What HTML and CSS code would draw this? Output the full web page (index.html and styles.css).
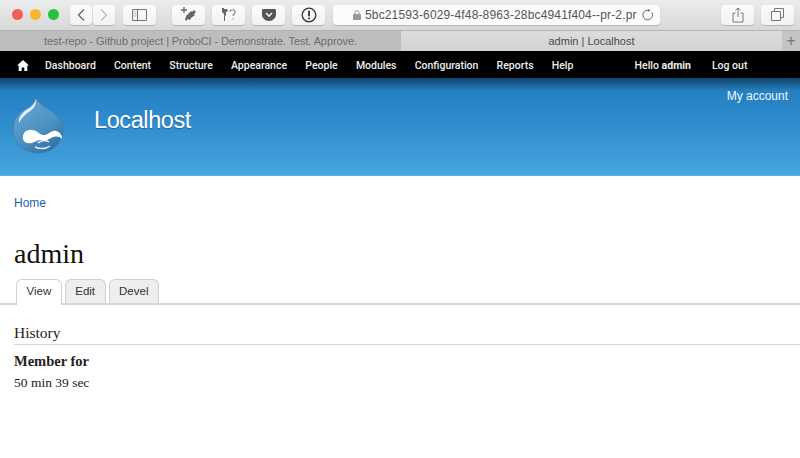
FILE: index.html
```html
<!DOCTYPE html>
<html lang="en">
<head>
  <meta charset="UTF-8">
  <title>admin | Localhost</title>
  <link rel="stylesheet" href="styles.css">
</head>
<body>
  <!-- Browser chrome -->
  <div class="toolbar">
    <div class="lights">
      <span class="light red"></span>
      <span class="light yellow"></span>
      <span class="light green"></span>
    </div>
    <div class="btn-pair">
      <span class="btn btn-nav">
        <svg width="10" height="14" viewBox="0 0 10 14"><path d="M8 1.5 2.5 7 8 12.5" fill="none" stroke="#666" stroke-width="1.3"/></svg>
      </span>
      <span class="btn btn-nav">
        <svg width="10" height="14" viewBox="0 0 10 14"><path d="M2 1.5 7.5 7 2 12.5" fill="none" stroke="#bbb" stroke-width="1.3"/></svg>
      </span>
    </div>
    <span class="btn btn-side">
      <svg width="15" height="12" viewBox="0 0 15 12"><path d="M.5.5h14v11H.5zM5.5.5v11" fill="none" stroke="#777"/><path d="M1.5 3h3M1.5 5h3M1.5 7h3" stroke="#bbb"/></svg>
    </span>
    <div class="ext-group">
      <span class="btn btn-ext">
        <svg width="16" height="15" viewBox="0 0 16 15"><path d="M5 9l5-5 1 1 2-2 2 2-2 2 1 1-4 3-1 2-2-1-2 2-1-2 1-2z" fill="#666"/><path d="M3 0v6M0 3h6" stroke="#666" stroke-width="1.3"/></svg>
      </span>
      <span class="btn btn-ext">
        <svg width="16" height="15" viewBox="0 0 16 15"><path d="M1 1h2v1h3l1 2-2 1v3L4 9v5H3V7L1 5z" fill="#666"/><path d="M9 5c0-3 5-3 5 0 0 2-2 2-2 4" fill="none" stroke="#888" stroke-width="1.2"/><path d="M12 11v1.500" stroke="#999"/></svg>
      </span>
      <span class="btn btn-ext">
        <svg width="14" height="12" viewBox="0 0 14 12"><path d="M0 1.5C0 .5.5 0 1.5 0h11c1 0 1.500.5 1.500 1.500v4C14 9 11 12 7 12S0 9 0 5.500z" fill="#555"/><path d="M4 4l3 3 3-3" fill="none" stroke="#f0f0f0" stroke-width="1.600"/></svg>
      </span>
      <span class="btn btn-ext">
        <svg width="16" height="16" viewBox="0 0 16 16"><circle cx="8" cy="8" r="6.800" fill="none" stroke="#333" stroke-width="1.300"/><path d="M8 3.800v5.500" stroke="#333" stroke-width="1.800"/><path d="M8 10.500v1.800" stroke="#333" stroke-width="1.800"/></svg>
      </span>
    </div>
    <div class="address">
      <svg class="lock" width="8" height="10" viewBox="0 0 8 10"><rect y="4" width="8" height="6" rx="1" fill="#999"/><path d="M2 4V2.500a2 2 0 0 1 4 0V4" fill="none" stroke="#999"/></svg>
      <span class="url">5bc21593-6029-4f48-8963-28bc4941f404--pr-2.pr</span>
      <svg class="reload" width="12" height="12" viewBox="0 0 12 12"><path d="M9.800 3.500A4.800 4.800 0 1 1 6 1.200" fill="none" stroke="#666"/><path d="M6 0l2.500 1.300L6 2.800z" fill="#666"/></svg>
    </div>
    <div class="toolbar-right">
      <span class="btn btn-ext">
        <svg width="12" height="16" viewBox="0 0 12 16"><path d="M3.500 6H1v9h10V6H8.500M6 10V1M3.500 3.300 6 1l2.500 2.300" fill="none" stroke="#777"/></svg>
      </span>
      <span class="btn btn-ext">
        <svg width="13" height="13" viewBox="0 0 13 13"><path d="M3.500 3V.5h9v9H10M.5 3.500h9v9h-9z" fill="none" stroke="#777"/></svg>
      </span>
    </div>
  </div>

  <div class="tabs-bar">
    <div class="browser-tab">test-repo - Github project | ProboCI - Demonstrate. Test. Approve.</div>
    <div class="browser-tab active">admin | Localhost</div>
    <div class="new-tab">+</div>
  </div>

  <!-- Admin menu -->
  <nav class="admin-menu">
    <svg class="home-icon" width="12" height="11" viewBox="0 0 12 11"><path d="M6 0 0 5.500h1.700V11h3V7.500h2.600V11h3V5.500H12z" fill="#fff"/></svg>
    <a href="#">Dashboard</a>
    <a href="#">Content</a>
    <a href="#">Structure</a>
    <a href="#">Appearance</a>
    <a href="#">People</a>
    <a href="#">Modules</a>
    <a href="#">Configuration</a>
    <a href="#">Reports</a>
    <a href="#">Help</a>
    <div class="menu-user">
      <span>Hello <b>admin</b></span>
      <a href="#">Log out</a>
    </div>
  </nav>

  <!-- Site header -->
  <header class="site-header">
    <svg class="logo" width="52" height="58" viewBox="0 0 52 58">
      <defs>
        <linearGradient id="dropFill" x1="0.2" y1="0" x2="0.8" y2="1">
          <stop offset="0" stop-color="#6aa8d4"/>
          <stop offset="0.6" stop-color="#4a90c0"/>
          <stop offset="1" stop-color="#2f6f9e"/>
        </linearGradient>
      </defs>
      <path d="M24 1c1 5 7 9 14 13 8 5 13 11 13 19 0 14-11 24-25 24S1 47 1 33C1 22 8 16 15 12c4-2 8-6 9-11z" fill="url(#dropFill)" stroke="#3a7cab" stroke-width="0.8"/>
      <path d="M24 3c0 5-1 9-6 12-4 3-8 6-11 12-1-6 4-11 9-14 4-2 7-6 8-10z" fill="#e8f2fa"/>
      <path d="M11 43c-1-6 4-10 9-9 5 0 8 6 13 5 4-1 7-5 11-4 4 1 6 4 6 8-3-3-7-3-11-1-3 2-6 3-10 2-4 0-6 2-9 3-4 1-8 0-9-4z" fill="#fff"/>
      <path d="M26 47c3-3 8-3 11-1" fill="none" stroke="#fff" stroke-width="1.500"/>
      <path d="M23 51c5 2 11 2 15-1" fill="none" stroke="#eaf3fa" stroke-width="1.500"/>
    </svg>
    <div class="site-name">Localhost</div>
    <a class="my-account" href="#">My account</a>
  </header>

  <main class="content">
    <a class="breadcrumb" href="#">Home</a>
    <h1 class="page-title">admin</h1>
    <ul class="tabs">
      <li class="tab active">View</li>
      <li class="tab">Edit</li>
      <li class="tab">Devel</li>
    </ul>
    <h3 class="section-title">History</h3>
    <div class="label">Member for</div>
    <div class="value">50 min 39 sec</div>
  </main>
</body>
</html>
```

FILE: styles.css
```css
* {
  margin: 0;
  padding: 0;
  box-sizing: border-box;
}
html, body {
  height: 100%;
  overflow: hidden;
}
body {
  background: #fff;
  font-family: "Liberation Sans", Arial, sans-serif;
}

/* browser chrome */
.toolbar {
  height: 30px;
  display: flex;
  align-items: center;
  padding: 0 6px 1px 11.5px;
  background: linear-gradient(#ececec, #d8d8d8);
}
.lights {
  display: flex;
  gap: 7px;
  width: 58.5px;
}
.light {
  width: 11px;
  height: 11px;
  border-radius: 50%;
}
.red { background: #f25d57; }
.yellow { background: #f9b52f; }
.green { background: #2ac13f; }
.btn {
  height: 20px;
  display: flex;
  align-items: center;
  justify-content: center;
  background: linear-gradient(#fbfbfb, #f2f2f2);
  border-radius: 4px;
  box-shadow: 0 1px 1px rgba(0,0,0,0.18);
}
.btn-pair {
  display: flex;
  gap: 1px;
}
.btn-nav { width: 22px; }
.btn-side {
  width: 33px;
  margin-left: 8px;
}
.btn-ext { width: 33px; }
.ext-group {
  display: flex;
  gap: 7px;
  margin-left: 16px;
}
.address {
  width: 327px;
  height: 20px;
  margin-left: 8px;
  display: flex;
  align-items: center;
  background: #fbfbfb;
  border-radius: 4px;
  box-shadow: 0 1px 1px rgba(0,0,0,0.18);
  padding-left: 20px;
  font-size: 12px;
  color: #555;
}
.url {
  width: 273px;
  margin-left: 4px;
  white-space: nowrap;
  letter-spacing: 0.15px;
}
.reload { margin-left: 4px; }
.toolbar-right {
  display: flex;
  gap: 7px;
  margin-left: auto;
}
.tabs-bar {
  height: 21px;
  display: flex;
  background: #bdbdbd;
  border-top: 1px solid #b4b4b4;
  font-size: 11px;
  color: #6d6d6d;
}
.browser-tab {
  width: 401px;
  text-align: center;
  line-height: 20px;
  white-space: nowrap;
  letter-spacing: -0.1px;
}
.browser-tab.active {
  width: 381px;
  background: linear-gradient(#dcdcdc, #d2d2d2);
  color: #4a4a4a;
  letter-spacing: 0;
}
.new-tab {
  width: 18px;
  text-align: center;
  font-size: 16px;
  line-height: 19px;
  color: #777;
  background: #c4c4c4;
}

/* admin menu */
.admin-menu {
  height: 27px;
  display: flex;
  align-items: center;
  background: #000;
  padding: 1px 0 0 17px;
  font-size: 10.5px;
  font-family: Roboto, "Liberation Sans", sans-serif;
  font-weight: 500;
  color: #eee;
}
.admin-menu a {
  color: #eee;
  text-decoration: none;
  margin-right: 18.2px;
}
.home-icon { margin-right: 16px; }
.menu-user {
  display: flex;
  gap: 21px;
  margin-left: 43px;
}
.menu-user a { margin: 0; }

/* site header */
.site-header {
  position: relative;
  height: 98px;
  display: flex;
  background: linear-gradient(#0f4468 0, #2580c0 13px, #2a86c8 30px, #45a5de 100%);
  border-bottom: 1px solid #5db0e6;
}
.logo {
  margin: 18px 0 0 12px;
}
.site-name {
  margin: 29px 0 0 30px;
  font-size: 23.5px;
  line-height: 26px;
  letter-spacing: -0.4px;
  color: #fff;
  text-shadow: 0 1px 1px rgba(0,0,0,0.3);
}
.my-account {
  position: absolute;
  top: 11px;
  right: 12px;
  font-size: 12px;
  color: #f0f4f8;
  text-decoration: none;
}

/* page content */
.content {
  padding: 20px 14px 0;
}
.breadcrumb {
  display: block;
  font-size: 12px;
  line-height: 14px;
  color: #1f5fa8;
  text-decoration: none;
}
.page-title {
  margin-top: 28px;
  font-family: "Liberation Serif", Georgia, serif;
  font-size: 28px;
  line-height: 32px;
  font-weight: normal;
  color: #111;
}
.tabs {
  list-style: none;
  display: flex;
  gap: 3px;
  margin: 9px -14px 0;
  padding-left: 16px;
  border-bottom: 2px solid #d8d8d8;
  height: 26px;
  font-size: 11.5px;
  color: #333;
}
.tab {
  height: 24px;
  padding: 0 9.5px;
  line-height: 22px;
  border: 1px solid #d0d0d0;
  border-bottom: 0;
  border-radius: 6px 6px 0 0;
  background: #eee;
}
.tab.active {
  height: 26px;
  background: #fff;
}
.section-title {
  margin-top: 19px;
  padding-bottom: 3px;
  border-bottom: 1px solid #d8d8d8;
  margin-right: -14px;
  font-family: "Liberation Serif", Georgia, serif;
  font-size: 15.5px;
  line-height: 17px;
  font-weight: normal;
  color: #222;
}
.label {
  margin-top: 9px;
  font-family: "Liberation Serif", Georgia, serif;
  font-size: 14.5px;
  line-height: 15px;
  font-weight: bold;
  color: #222;
}
.value {
  margin-top: 6px;
  font-family: "Liberation Serif", Georgia, serif;
  font-size: 13.5px;
  line-height: 15px;
  color: #222;
}
```
